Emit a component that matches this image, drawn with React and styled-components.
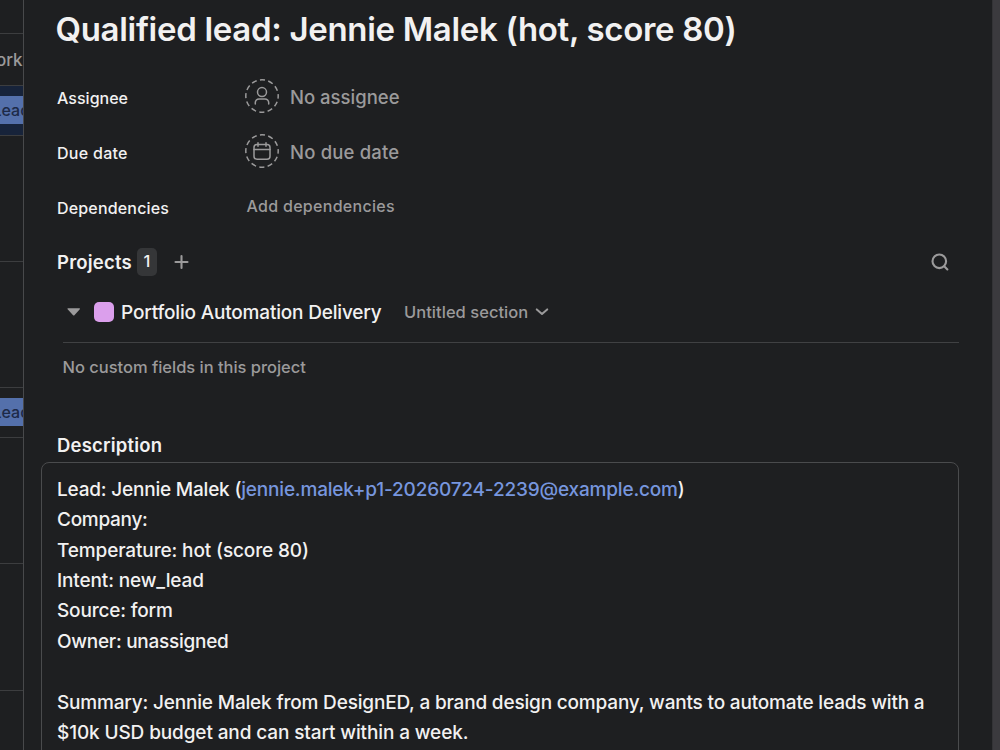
import React from "react";
import styled, { createGlobalStyle } from "styled-components";

const color = {
  bg: "#1e1f21",
  line: "#3c3d3f",
  text: "#f2f1f1",
  weak: "#9b9a9b",
  link: "#7796de",
};

const GlobalStyle = createGlobalStyle`
  *, *::before, *::after { box-sizing: border-box; }
  html, body { margin: 0; padding: 0; background: ${color.bg}; overflow: hidden; }
  body { font-family: Inter, "Liberation Sans", sans-serif; color: ${color.text}; }
  h1, h2, p { margin: 0; }
`;

const Page = styled.div`
  display: flex;
  width: 1000px;
  height: 750px;
  overflow: hidden;
  background: ${color.bg};
`;

const ListPane = styled.aside`
  flex: 0 0 24px;
  overflow: hidden;
  border-right: 1px solid #48494b;
`;

const ListRow = styled.div`
  display: flex;
  align-items: center;
  height: ${(p) => p.$height}px;
  border-bottom: 1px solid ${color.line};
  background: ${(p) => (p.$selected ? "#17233a" : "transparent")};
  overflow: hidden;
`;

const ColumnName = styled.span`
  flex: none;
  margin-left: -4px;
  font-size: 17px;
  font-weight: 450;
  color: ${color.weak};
`;

const Chip = styled.span`
  flex: none;
  width: 60px;
  height: 28px;
  margin: 0 0 1px -12px;
  padding-left: 4.5px;
  background: #5470ab;
  color: #1d2a48;
  font-size: 16px;
  font-weight: 450;
  line-height: 28px;
`;

const Panel = styled.main`
  flex: 1;
  display: flex;
  flex-direction: column;
  min-width: 0;
  padding: 0 33px 0 17px;

  > * {
    flex: none;
  }
`;

const Backdrop = styled.div`
  flex: 0 0 8px;
  background: #3b3a3e;
  border-left: 1px solid #333336;
`;

const Title = styled.h1`
  height: 58px;
  padding-left: 14.5px;
  font-size: 33px;
  font-weight: 600;
  line-height: 58px;
  letter-spacing: ${(p) => p.$track}px;
  white-space: nowrap;
`;

const Fields = styled.div`
  display: flex;
  flex-direction: column;
  padding: 10.4px 0 0 16px;
`;

const Field = styled.div`
  display: grid;
  grid-template-columns: 188px 1fr;
  align-items: center;
  height: 55.4px;
`;

const FieldLabel = styled.span`
  padding-top: 3px;
  font-size: 16px;
  font-weight: 500;
  letter-spacing: ${(p) => p.$track}px;
`;

const FieldValue = styled.span`
  display: flex;
  align-items: center;
  gap: 11px;
  font-size: 18.5px;
  line-height: 24px;
  font-weight: 450;
  color: ${color.weak};
  letter-spacing: ${(p) => p.$track}px;
`;

const ValueText = styled.span`
  padding-top: 1.4px;
`;

const AddLink = styled.span`
  padding: 0 0 1px 1.5px;
  font-size: 16px;
  font-weight: 500;
  color: ${color.weak};
  letter-spacing: ${(p) => p.$track}px;
`;

const ProjectsHeader = styled.div`
  display: flex;
  align-items: center;
  height: 56.4px;
  padding: 0 10px 2px 16px;
`;

const SectionTitle = styled.h2`
  font-size: 18.5px;
  font-weight: 600;
  letter-spacing: ${(p) => p.$track}px;
`;

const Count = styled.span`
  width: 20px;
  height: 28px;
  margin: 0 16px 0 5px;
  border-radius: 5px;
  background: #353638;
  font-size: 16.5px;
  font-weight: 500;
  line-height: 27px;
  text-align: center;
`;

const Spacer = styled.span`
  flex: 1;
`;

const ProjectRow = styled.div`
  display: flex;
  align-items: center;
  height: 52px;
  margin-left: 22px;
  padding-bottom: 9px;
  border-bottom: 1px solid #404143;
`;

const Swatch = styled.span`
  width: 20px;
  height: 20px;
  margin: 0 7px 0 14px;
  border-radius: 5px;
  background: #db9fec;
`;

const ProjectName = styled.span`
  width: 283px;
  padding-top: 1.4px;
  font-size: 19px;
  font-weight: 500;
  letter-spacing: ${(p) => p.$track}px;
  white-space: nowrap;
`;

const SectionPicker = styled.span`
  width: 131px;
  font-size: 16.5px;
  font-weight: 450;
  color: ${color.weak};
  letter-spacing: ${(p) => p.$track}px;
  white-space: nowrap;
`;

const EmptyFields = styled.p`
  height: 84px;
  padding: 12px 0 0 21.6px;
  font-size: 16.5px;
  font-weight: 450;
  line-height: 24px;
  color: ${color.weak};
  letter-spacing: ${(p) => p.$track}px;
`;

const DescriptionHead = styled.div`
  height: 35px;
  padding: 6px 0 0 16px;
  line-height: 24px;
`;

const DescriptionBox = styled.section`
  height: 310px;
  padding: 11.9px 0 0 15px;
  border: 1px solid #4a4b4d;
  border-radius: 8px;
`;

const Line = styled.p`
  height: 30.4px;
  font-size: 19px;
  font-weight: 450;
  line-height: 30.4px;
  letter-spacing: ${(p) => p.$track}px;
  white-space: nowrap;
`;

const MailLink = styled.span`
  color: ${color.link};
  letter-spacing: ${(p) => p.$track}px;
`;

const Icon = styled.svg`
  flex: none;
  display: block;
  fill: none;
  stroke: ${color.weak};
  stroke-linecap: round;
  stroke-linejoin: round;
`;

const SolidIcon = styled(Icon)`
  fill: ${color.weak};
  stroke: none;
`;

const Ring = () => (
  <circle cx="17" cy="17" r="16.2" strokeWidth="1.5" strokeDasharray="5.2 3.28" strokeDashoffset="2.6" strokeLinecap="butt" />
);

const PersonIcon = () => (
  <Icon width="34" height="34" viewBox="0 0 34 34" strokeWidth="1.5">
    <Ring />
    <circle cx="17" cy="13.1" r="4.5" />
    <path d="M10.3 25v-1.4a3.7 3.7 0 0 1 3.7-3.7h6a3.7 3.7 0 0 1 3.7 3.7V25" />
  </Icon>
);

const CalendarIcon = () => (
  <Icon width="34" height="34" viewBox="0 0 34 34" strokeWidth="1.5">
    <Ring />
    <rect x="9" y="10.4" width="16" height="14.8" rx="3" />
    <path d="M9 15.4h16M13 8.8v3.4M21 8.8v3.4" />
  </Icon>
);

const lines = [
  ["Company:", -0.28],
  ["Temperature: hot (score 80)", -0.13],
  ["Intent: new_lead", -0.13],
  ["Source: form", -0.18],
  ["Owner: unassigned", -0.27],
  ["", 0],
  ["Summary: Jennie Malek from DesignED, a brand design company, wants to automate leads with a", -0.18],
  ["$10k USD budget and can start within a week.", -0.12],
];

export default function App() {
  return (
    <Page>
      <GlobalStyle />
      <ListPane>
        <ListRow $height={34} />
        <ListRow $height={52}><ColumnName>ork</ColumnName></ListRow>
        <ListRow $height={50} $selected><Chip>Lead</Chip></ListRow>
        <ListRow $height={126} />
        <ListRow $height={126} />
        <ListRow $height={50}><Chip>Lead</Chip></ListRow>
        <ListRow $height={126} />
        <ListRow $height={127} />
      </ListPane>
      <Panel>
        <Title $track={-0.31}>Qualified lead: Jennie Malek (hot, score 80)</Title>
        <Fields>
          <Field>
            <FieldLabel $track={0.02}>Assignee</FieldLabel>
            <FieldValue $track={0}><PersonIcon /><ValueText>No assignee</ValueText></FieldValue>
          </Field>
          <Field>
            <FieldLabel $track={0.28}>Due date</FieldLabel>
            <FieldValue $track={0.18}><CalendarIcon /><ValueText>No due date</ValueText></FieldValue>
          </Field>
          <Field>
            <FieldLabel $track={0.17}>Dependencies</FieldLabel>
            <AddLink $track={0.3}>Add dependencies</AddLink>
          </Field>
        </Fields>
        <ProjectsHeader>
          <SectionTitle $track={0.2}>Projects</SectionTitle>
          <Count>1</Count>
          <Icon width="16" height="16" viewBox="0 0 16 16" strokeWidth="2.1">
            <path d="M8.5 2v12M2.5 8h12" />
          </Icon>
          <Spacer />
          <Icon width="18" height="18" viewBox="0 0 18 18" strokeWidth="2.1">
            <circle cx="8.3" cy="8.3" r="6.8" />
            <path d="M13.2 13.2l3.2 3.2" />
          </Icon>
        </ProjectsHeader>
        <ProjectRow>
          <SolidIcon width="17" height="10" viewBox="0 0 17 10">
            <path d="M5 1.2h11.4c.6 0 .8.6.4 1L11.4 8.3c-.4.4-.9.4-1.3 0L4.6 2.2c-.4-.4-.2-1 .4-1z" />
          </SolidIcon>
          <Swatch />
          <ProjectName $track={-0.18}>Portfolio Automation Delivery</ProjectName>
          <SectionPicker $track={0.03}>Untitled section</SectionPicker>
          <Icon width="14" height="8" viewBox="0 0 14 8" strokeWidth="2">
            <path d="M1.8 1.4L7 6l5.2-4.6" />
          </Icon>
        </ProjectRow>
        <EmptyFields $track={-0.03}>No custom fields in this project</EmptyFields>
        <DescriptionHead><SectionTitle $track={0.2}>Description</SectionTitle></DescriptionHead>
        <DescriptionBox>
          <Line $track={-0.2}>
            Lead: Jennie Malek (<MailLink $track={-0.18}>jennie.malek+p1-20260724-2239@example.com</MailLink>)
          </Line>
          {lines.map(([text, track], i) => (
            <Line key={i} $track={track}>{text}</Line>
          ))}
        </DescriptionBox>
      </Panel>
      <Backdrop />
    </Page>
  );
}
